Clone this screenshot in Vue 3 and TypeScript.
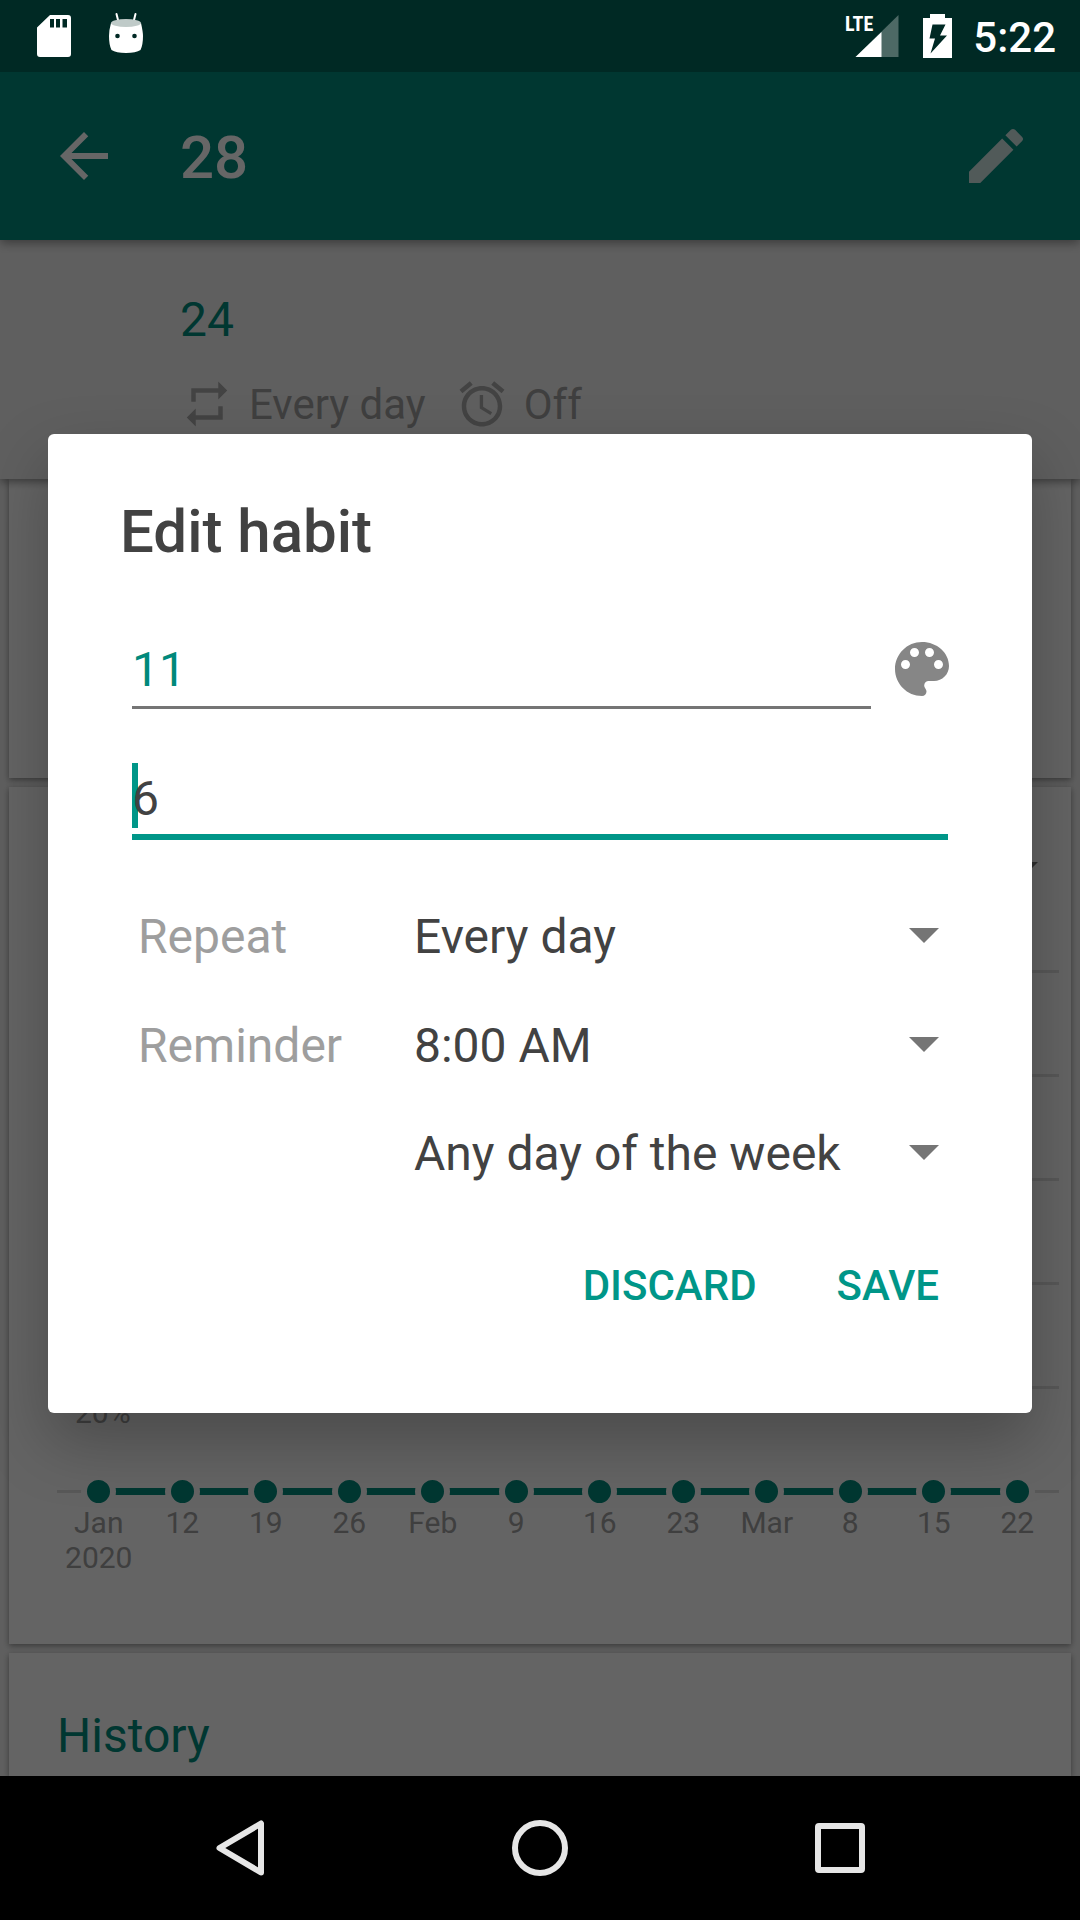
<script setup lang="ts">
import { ref } from 'vue'

interface Tick {
  label: string
  year?: string
}

const ticks: Tick[] = [
  { label: 'Jan', year: '2020' },
  { label: '12' },
  { label: '19' },
  { label: '26' },
  { label: 'Feb' },
  { label: '9' },
  { label: '16' },
  { label: '23' },
  { label: 'Mar' },
  { label: '8' },
  { label: '15' },
  { label: '22' },
]

const gridRows: string[] = ['', '', '', '', '20%']

const name = ref('11')
const question = ref('6')
const frequency = ref('Every day')
const reminderTime = ref('8:00 AM')
const reminderDays = ref('Any day of the week')
</script>

<template>
  <div class="screen">
    <div class="status-bar">
      <div class="status-group notices">
        <svg class="sd" viewBox="0 0 34 42" aria-hidden="true">
          <path fill="#fff" fill-rule="evenodd" d="M13 0H31a3 3 0 0 1 3 3V39a3 3 0 0 1-3 3H3a3 3 0 0 1-3-3V12.500zM13 4V12.500h4V4zM19 4V12.500h4V4zM25.500 4V12.500h4.500V4z" />
        </svg>
        <svg class="robot" viewBox="0 0 34 42" aria-hidden="true">
          <path stroke="#fff" stroke-width="2" stroke-linecap="round" d="M7.500 2l2 8M26.500 2l-2 8" />
          <path fill="#fff" d="M2 11Q17 15 32 11Q34 20 34 24Q34 33 31.500 38Q27 41 17 41Q7 41 2.500 38Q0 33 0 24Q0 18 2 11z" />
          <ellipse cx="17" cy="11" rx="15" ry="4" fill="#bfcac8" />
          <circle cx="8.500" cy="24" r="2.300" fill="#002924" />
          <circle cx="25.500" cy="24" r="2.300" fill="#002924" />
        </svg>
      </div>
      <div class="status-group">
        <svg class="signal" viewBox="0 0 54 44" aria-hidden="true">
          <path fill="#4d6965" d="M53.500 1V43H10.500z" />
          <path fill="#fff" d="M36.500 18V43H10.500z" />
          <text class="lte" x="0" y="17">LTE</text>
        </svg>
        <svg class="battery" viewBox="0 0 29 44" aria-hidden="true">
          <path fill="#fff" fill-rule="evenodd" d="M7 0h15v4h7v40H0V4h7zM9.500 10.500L6.500 24.500H12L7.500 39.500L24 21.500H17L22.500 10.500z" />
        </svg>
        <time class="clock">5:22</time>
      </div>
    </div>

    <main class="stage">
      <div class="app">
        <header class="toolbar">
          <button class="icon-button" type="button" aria-label="Back">
            <svg viewBox="0 0 24 24"><path fill="#fff" d="M20 11H7.830l5.590-5.590L12 4l-8 8 8 8 1.410-1.410L7.830 13H20v-2z" /></svg>
          </button>
          <h1>28</h1>
          <button class="icon-button" type="button" aria-label="Edit">
            <svg viewBox="0 0 24 24"><path fill="#cbe1df" d="M3 17.250V21h3.750L17.810 9.940l-3.750-3.750L3 17.250zM20.710 7.040c.39-.39.39-1.020 0-1.410l-2.340-2.340c-.39-.39-1.020-.39-1.410 0l-1.830 1.830 3.750 3.750 1.830-1.830z" /></svg>
          </button>
        </header>

        <section class="summary">
          <p class="question">24</p>
          <div class="facts">
            <svg viewBox="0 0 24 24" aria-hidden="true"><path fill="#a8a8a8" d="M7 7h10v3l4-4-4-4v3H5v6h2V7zm10 10H7v-3l-4 4 4 4v-3h12v-6h-2v4z" /></svg>
            <span>Every day</span>
            <svg class="alarm" viewBox="0 0 24 24" aria-hidden="true"><path fill="#a8a8a8" d="M22 5.720l-4.600-3.860-1.290 1.530 4.600 3.860L22 5.720zM7.880 3.390L6.600 1.860 2 5.710l1.290 1.530 4.590-3.850zM12.500 8H11v6l4.750 2.850.75-1.230-4-2.370V8zM12 4c-4.970 0-9 4.030-9 9s4.020 9 9 9c4.970 0 9-4.030 9-9s-4.030-9-9-9zm0 16c-3.870 0-7-3.130-7-7s3.130-7 7-7 7 3.130 7 7-3.130 7-7 7z" /></svg>
            <span>Off</span>
          </div>
        </section>

        <div class="cards">
          <section class="card overview"></section>

          <section class="card strength">
            <div class="chart-head">
              <button class="period" type="button" aria-label="Period">
                <svg class="caret" viewBox="0 0 30 15"><path d="M0 0H30L15 15z" /></svg>
              </button>
            </div>
            <div v-for="(row, i) in gridRows" :key="i" class="grid-row">{{ row }}</div>
            <div class="axis">
              <div v-for="tick in ticks" :key="tick.label" class="tick">
                <div class="point"><i class="dot"></i></div>
                <span>{{ tick.label }}</span>
                <span v-if="tick.year">{{ tick.year }}</span>
              </div>
            </div>
          </section>

          <section class="card history">
            <h2>History</h2>
          </section>
        </div>
      </div>

      <div class="scrim">
        <form class="dialog" role="dialog" aria-labelledby="dialog-title" @submit.prevent>
          <h2 id="dialog-title">Edit habit</h2>
          <div class="name-row">
            <input v-model="name" class="field name" type="text" aria-label="Name" />
            <button class="icon-button" type="button" aria-label="Color">
              <svg viewBox="0 0 24 24"><path fill="#868686" d="M12 3c-4.970 0-9 4.030-9 9s4.030 9 9 9c.83 0 1.500-.67 1.500-1.500 0-.39-.15-.74-.39-1.010-.23-.26-.38-.61-.38-.99 0-.83.67-1.500 1.500-1.500H16c2.760 0 5-2.240 5-5 0-4.420-4.030-8-9-8zm-5.500 9c-.83 0-1.500-.67-1.500-1.500S5.670 9 6.500 9 8 9.670 8 10.500 7.330 12 6.500 12zm3-4C8.670 8 8 7.330 8 6.500S8.670 5 9.500 5s1.500.67 1.500 1.500S10.330 8 9.500 8zm5 0c-.83 0-1.500-.67-1.500-1.500S13.670 5 14.500 5s1.500.67 1.500 1.500S15.330 8 14.500 8zm3 4c-.83 0-1.500-.67-1.500-1.500S16.670 9 17.500 9s1.500.67 1.500 1.500-.67 1.500-1.500 1.500z" /></svg>
            </button>
          </div>
          <input v-model="question" class="field focused" type="text" aria-label="Question" />

          <div class="options">
            <div class="option">
              <label for="repeat">Repeat</label>
              <div class="select">
                <select id="repeat" v-model="frequency"><option>Every day</option></select>
                <svg class="caret" viewBox="0 0 30 15" aria-hidden="true"><path d="M0 0H30L15 15z" /></svg>
              </div>
            </div>
            <div class="option">
              <label for="reminder">Reminder</label>
              <div class="select">
                <select id="reminder" v-model="reminderTime"><option>8:00 AM</option></select>
                <svg class="caret" viewBox="0 0 30 15" aria-hidden="true"><path d="M0 0H30L15 15z" /></svg>
              </div>
            </div>
            <div class="option">
              <div class="select">
                <select v-model="reminderDays" aria-label="Reminder days"><option>Any day of the week</option></select>
                <svg class="caret" viewBox="0 0 30 15" aria-hidden="true"><path d="M0 0H30L15 15z" /></svg>
              </div>
            </div>
          </div>

          <div class="actions">
            <button type="button">DISCARD</button>
            <button type="submit">SAVE</button>
          </div>
        </form>
      </div>
    </main>

    <nav class="nav-bar">
      <button type="button" aria-label="Back">
        <svg viewBox="0 0 60 60"><path d="M9.500 30L51 5.500V54.500z" /></svg>
      </button>
      <button type="button" aria-label="Home">
        <svg viewBox="0 0 60 60"><circle cx="30" cy="30" r="25" /></svg>
      </button>
      <button type="button" aria-label="Recents">
        <svg viewBox="0 0 60 60"><rect x="8" y="8" width="44" height="44" rx="1" /></svg>
      </button>
    </nav>
  </div>
</template>

<style>
body {
  margin: 0;
  background: #000;
}
</style>

<style scoped>
.screen {
  display: flex;
  flex-direction: column;
  height: 100vh;
  font-family: Roboto, "Liberation Sans", sans-serif;
}

h1,
h2,
p {
  margin: 0;
}

svg {
  display: block;
}

button {
  padding: 0;
  border: 0;
  background: none;
  font-family: inherit;
}

.status-bar {
  display: flex;
  flex: none;
  align-items: center;
  justify-content: space-between;
  height: 72px;
  padding: 0 24px 0 37px;
  background: #002924;
}

.status-group {
  display: flex;
  align-items: center;
}

.notices {
  gap: 38px;
}

.sd {
  width: 34px;
  height: 42px;
}

.robot {
  width: 34px;
  height: 42px;
  margin-bottom: 6px;
}

.signal {
  width: 54px;
  height: 44px;
  margin-right: 24px;
  overflow: visible;
}

.lte {
  fill: #fff;
  font-family: "Roboto Condensed", "Liberation Sans Narrow", Roboto, sans-serif;
  font-size: 20px;
  font-weight: 700;
}

.battery {
  width: 29px;
  height: 44px;
  margin-right: 21px;
}

.clock {
  padding-top: 4px;
  color: #fff;
  font-size: 42px;
  font-weight: 500;
  line-height: 68px;
}

.stage {
  position: relative;
  flex: 1;
  min-height: 0;
  overflow: hidden;
  background: #eee;
}

.app {
  display: flex;
  flex-direction: column;
  height: 100%;
}

.toolbar {
  position: relative;
  z-index: 2;
  display: flex;
  flex: none;
  align-items: center;
  height: 168px;
  padding: 0 48px;
  background: #00897b;
  box-shadow: 0 3px 10px rgba(0, 0, 0, 0.4);
}

.toolbar h1 {
  flex: 1;
  margin-left: 60px;
  padding-top: 4px;
  color: #fff;
  font-size: 60px;
  font-weight: 500;
  line-height: 72px;
}

.icon-button {
  flex: none;
  width: 72px;
  height: 72px;
}

.summary {
  position: relative;
  z-index: 1;
  flex: none;
  padding: 52px 48px 47px 180px;
  background: #eee;
  box-shadow: 0 3px 8px rgba(0, 0, 0, 0.4);
}

.question {
  margin-bottom: 28px;
  color: #00897b;
  font-size: 48px;
  line-height: 56px;
}

.facts {
  display: flex;
  align-items: center;
  gap: 15px;
  color: #9e9e9e;
  font-size: 42px;
  line-height: 54px;
}

.facts svg {
  width: 54px;
  height: 54px;
}

.facts span {
  padding-top: 2px;
}

.facts .alarm {
  margin-left: 14px;
}

.cards {
  display: flex;
  flex: 1;
  flex-direction: column;
  gap: 9px;
  min-height: 0;
  padding: 0 9px;
}

.card {
  flex: none;
  background: #fafafa;
  box-shadow: 0 2px 6px rgba(0, 0, 0, 0.4);
}

.overview {
  height: 299px;
}

.strength {
  box-sizing: border-box;
  padding: 0 12px 69px 48px;
}

.chart-head {
  display: flex;
  align-items: center;
  justify-content: flex-end;
  height: 165px;
  padding: 0 21px 18px 0;
}

.caret {
  width: 30px;
  height: 15px;
  fill: #757575;
}

.grid-row {
  box-sizing: border-box;
  height: 104px;
  padding: 6px 18px;
  border-top: 3px solid #dcdcdc;
  color: #9e9e9e;
  font-size: 30px;
  line-height: 36px;
}

.grid-row:nth-last-child(2) {
  height: 90px;
}

.axis {
  position: relative;
  display: flex;
}

.axis::before {
  position: absolute;
  top: 14px;
  right: 0;
  left: 0;
  height: 3px;
  background: #dcdcdc;
  content: "";
}

.tick {
  position: relative;
  display: flex;
  flex: 1;
  flex-direction: column;
  align-items: center;
  color: #9e9e9e;
  font-size: 30px;
  line-height: 35px;
}

.tick + .tick::before {
  position: absolute;
  top: 12px;
  right: 50%;
  width: 100%;
  height: 7px;
  background: #00897b;
  content: "";
}

.point {
  z-index: 1;
  display: flex;
  align-items: center;
  height: 29px;
  padding-top: 1px;
  margin-bottom: -1px;
}

.dot {
  width: 23px;
  height: 23px;
  border: 6px solid #fafafa;
  border-radius: 50%;
  background: #00897b;
}

.history {
  flex: 1;
  min-height: 0;
}

.history h2 {
  padding: 55px 48px 0;
  color: #00897b;
  font-size: 48px;
  font-weight: 400;
  line-height: 56px;
}

.scrim {
  position: absolute;
  inset: 0;
  z-index: 3;
  display: flex;
  align-items: center;
  justify-content: center;
  padding: 0 48px 2px;
  background: rgba(0, 0, 0, 0.6);
}

.dialog {
  box-sizing: border-box;
  flex: 1;
  padding: 62px 84px 73px;
  border-radius: 6px;
  background: #fff;
  box-shadow: 0 28px 64px rgba(0, 0, 0, 0.26);
  color: #424242;
}

.dialog h2 {
  margin: 0 0 65px -12px;
  font-size: 60px;
  font-weight: 500;
  line-height: 72px;
}

.name-row {
  display: flex;
  gap: 15px;
  margin: 0 -10px 54px 0;
}

.field {
  box-sizing: border-box;
  width: 100%;
  min-width: 0;
  padding: 0;
  border: 0;
  border-radius: 0;
  outline: 0;
  background: none;
  color: #424242;
  font-family: inherit;
  font-size: 48px;
}

.name {
  flex: 1;
  height: 76px;
  border-bottom: 3px solid #757575;
  color: #00897b;
}

.focused {
  display: block;
  height: 77px;
  border-bottom: 6px solid #009688;
  background: linear-gradient(#009688, #009688) 0 0 / 6px 65px no-repeat;
}

.options {
  margin-top: 43px;
  font-size: 48px;
}

.option {
  display: flex;
  align-items: center;
  justify-content: flex-end;
  height: 108px;
  padding-left: 6px;
}

.option + .option {
  padding-top: 1px;
  margin-bottom: -1px;
}

.option label {
  flex: 1;
  color: #9e9e9e;
}

.select {
  display: flex;
  flex: none;
  align-items: center;
  width: calc(100% - 276px);
}

.select select {
  width: 100%;
  height: 108px;
  padding: 0;
  border: 0;
  outline: 0;
  appearance: none;
  background: none;
  color: #424242;
  font-family: inherit;
  font-size: 48px;
}

.select .caret {
  flex: none;
  margin: 0 9px 3px -39px;
  pointer-events: none;
}

.actions {
  display: flex;
  justify-content: flex-end;
  gap: 80px;
  margin-top: 25px;
  padding-right: 9px;
}

.actions button {
  height: 108px;
  color: #009688;
  font-size: 42px;
  font-weight: 500;
}

.nav-bar {
  display: flex;
  flex: none;
  height: 144px;
  padding: 0 90px;
  background: #000;
}

.nav-bar button {
  display: flex;
  flex: 1;
  align-items: center;
  justify-content: center;
}

.nav-bar svg {
  width: 60px;
  height: 60px;
  fill: none;
  stroke: #e6e6e6;
  stroke-linejoin: round;
  stroke-width: 6px;
}
</style>
